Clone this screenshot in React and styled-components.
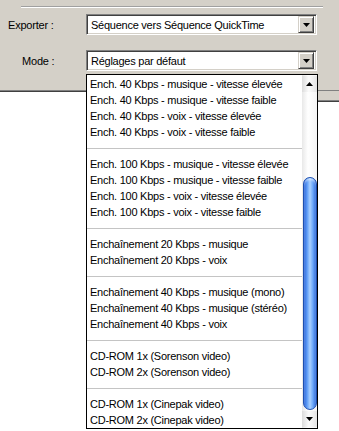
import React from 'react';
import styled, { createGlobalStyle } from 'styled-components';

const GlobalStyle = createGlobalStyle`
  html, body {
    margin: 0;
    padding: 0;
    background: #ffffff;
  }
  body {
    font-family: "Liberation Sans", Arial, sans-serif;
    font-size: 11px;
    color: #000;
  }
`;

const groups = [
  [
    'Ench. 40 Kbps - musique - vitesse élevée',
    'Ench. 40 Kbps - musique - vitesse faible',
    'Ench. 40 Kbps - voix - vitesse élevée',
    'Ench. 40 Kbps - voix - vitesse faible'
  ],
  [
    'Ench. 100 Kbps - musique - vitesse élevée',
    'Ench. 100 Kbps - musique - vitesse faible',
    'Ench. 100 Kbps - voix - vitesse élevée',
    'Ench. 100 Kbps - voix - vitesse faible'
  ],
  ['Enchaînement 20 Kbps - musique', 'Enchaînement 20 Kbps - voix'],
  [
    'Enchaînement 40 Kbps - musique (mono)',
    'Enchaînement 40 Kbps - musique (stéréo)',
    'Enchaînement 40 Kbps - voix'
  ],
  ['CD-ROM 1x (Sorenson video)', 'CD-ROM 2x (Sorenson video)'],
  ['CD-ROM 1x (Cinepak video)', 'CD-ROM 2x (Cinepak video)']
];

const Page = styled.div`
  position: relative;
  width: 339px;
  height: 431px;
  overflow: hidden;
  background: #fff;
`;

const Panel = styled.div`
  position: relative;
  height: 91px;
  background: #d4d0c8;
  border-bottom: 1px solid #808080;
  box-shadow: 0 1px 0 #404040;
  padding-top: 6px;
  box-sizing: border-box;

  &::after {
    content: '';
    position: absolute;
    right: 0;
    top: 91px;
    width: 21px;
    height: 9px;
    background: #d4d0c8;
    border-bottom: 1px solid #808080;
    box-shadow: 0 1px 0 #404040;
  }
`;

const Etched = styled.div`
  margin: 0 16px 0 21px;
  height: 1px;
  background: #a0a0a0;
  border-bottom: 1px solid #ffffff;
`;

const Form = styled.div`
  display: flex;
  flex-direction: column;
  gap: 15px;
  margin-top: 6px;
`;

const Row = styled.div`
  display: flex;
  align-items: center;
  height: 21px;
`;

const Label = styled.div`
  width: 86px;
  box-sizing: border-box;
  padding-left: ${p => p.$indent}px;
  letter-spacing: -0.2px;
`;

const Combo = styled.div`
  width: 231px;
  height: 21px;
  box-sizing: border-box;
  display: flex;
  align-items: center;
  background: #fff;
  border-top: 1px solid #808080;
  border-left: 1px solid #808080;
  border-right: 1px solid #ffffff;
  border-bottom: 1px solid #ffffff;
  box-shadow: inset 1px 1px 0 #404040, inset -1px -1px 0 #d4d0c8;
`;

const ComboText = styled.div`
  flex: 1;
  padding-left: 4px;
  letter-spacing: -0.25px;
  white-space: nowrap;
`;

const DropButton = styled.div`
  width: 16px;
  height: 17px;
  margin-right: 2px;
  box-sizing: border-box;
  background: #d4d0c8;
  border-top: 1px solid #d4d0c8;
  border-left: 1px solid #d4d0c8;
  border-right: 1px solid #404040;
  border-bottom: 1px solid #404040;
  box-shadow: inset 1px 1px 0 #ffffff, inset -1px -1px 0 #808080;
  display: flex;
  align-items: center;
  justify-content: center;
`;

const Arrow = ({ up }) => (
  <svg width="7" height="4" viewBox="0 0 7 4">
    <path d={up ? 'M0 4 L7 4 L3.5 0 Z' : 'M0 0 L7 0 L3.5 4 Z'} fill="#000" />
  </svg>
);

const ListBox = styled.div`
  position: absolute;
  left: 86px;
  top: 74px;
  width: 232px;
  height: 355px;
  box-sizing: border-box;
  border: 1px solid #000;
  background: #fff;
  display: flex;
`;

const Items = styled.div`
  flex: 1;
  padding-top: 1px;
`;

const Item = styled.div`
  height: 16px;
  line-height: 16px;
  padding-left: 3px;
  white-space: nowrap;
  letter-spacing: -0.25px;
  color: #000;
`;

const Divider = styled.div`
  height: 16px;
  display: flex;
  align-items: center;

  &::before {
    content: '';
    flex: 1;
    height: 1px;
    background: #c4c4c4;
  }
`;

const ScrollBar = styled.div`
  width: 15px;
  display: flex;
  flex-direction: column;
  padding: 1px 0;
  background: linear-gradient(to right, #e8e8e8, #ffffff 40%, #f4f4f4);
`;

const ScrollButton = styled.div`
  height: 16px;
  display: flex;
  align-items: ${p => (p.$up ? 'center' : 'center')};
  justify-content: center;
  background: linear-gradient(to right, #dcdcdc, #fbfbfb 45%, #e4e4e4);
`;

const Track = styled.div`
  flex: 1;
  display: flex;
  flex-direction: column;
  justify-content: flex-end;
`;

const Thumb = styled.div`
  height: 231px;
  margin: 0 0 1px 1px;
  border-radius: 7px;
  border: 1px solid #1d4fb0;
  background: linear-gradient(
    to right,
    #2a64d8 0%,
    #5d9bf6 25%,
    #a9d0ff 50%,
    #6aa6fa 75%,
    #2c66d6 100%
  );
  box-shadow: inset 0 2px 2px rgba(255, 255, 255, 0.5);
`;

export default function App() {
  return (
    <Page>
      <GlobalStyle />
      <Panel>
        <Etched />
        <Form>
          <Row>
            <Label $indent={8}>Exporter :</Label>
            <Combo>
              <ComboText>Séquence vers Séquence QuickTime</ComboText>
              <DropButton>
                <Arrow />
              </DropButton>
            </Combo>
          </Row>
          <Row>
            <Label $indent={22}>Mode :</Label>
            <Combo>
              <ComboText>Réglages par défaut</ComboText>
              <DropButton>
                <Arrow />
              </DropButton>
            </Combo>
          </Row>
        </Form>
      </Panel>
      <ListBox>
        <Items>
          {groups.map((group, gi) => (
            <React.Fragment key={gi}>
              {gi > 0 && <Divider />}
              {group.map(label => (
                <Item key={label}>{label}</Item>
              ))}
            </React.Fragment>
          ))}
        </Items>
        <ScrollBar>
          <ScrollButton $up>
            <Arrow up />
          </ScrollButton>
          <Track>
            <Thumb />
          </Track>
          <ScrollButton>
            <Arrow />
          </ScrollButton>
        </ScrollBar>
      </ListBox>
    </Page>
  );
}
